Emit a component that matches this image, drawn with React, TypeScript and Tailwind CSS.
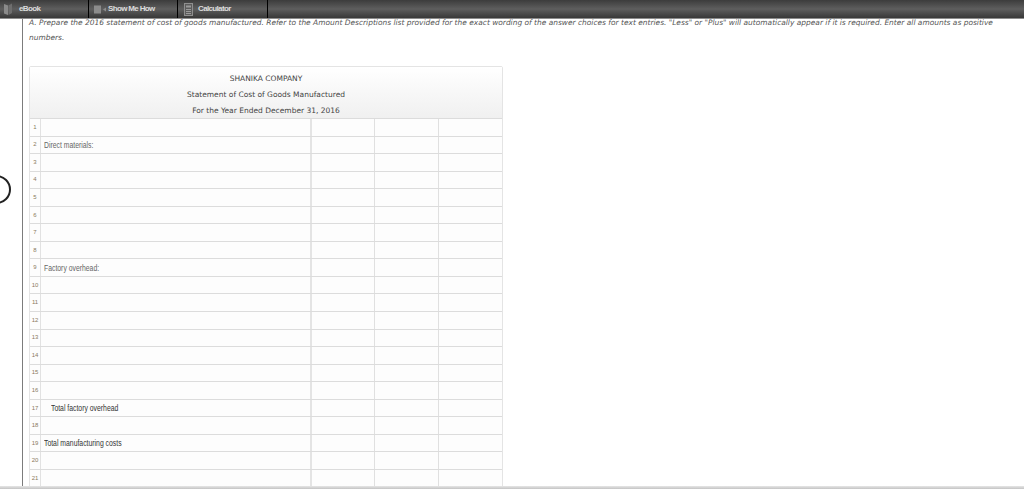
const labels: Record<number, { text: string; indent?: boolean; dark?: boolean }> = {
  2: { text: "Direct materials:" },
  9: { text: "Factory overhead:" },
  17: { text: "Total factory overhead", indent: true, dark: true },
  19: { text: "Total manufacturing costs", dark: true },
};

const rows = Array.from({ length: 21 }, (_, i) => i + 1);

function BookIcon() {
  return (
    <svg width="10" height="14" viewBox="0 0 10 14" className="mr-[6px]">
      <path d="M1 2 L5 3.5 V13 L1 11.5 Z" fill="#8a8a8a" />
      <path d="M5.5 3.5 L9 1.5 V11 L5.5 13 Z" fill="#6e6e6e" />
    </svg>
  );
}

function VideoIcon() {
  return (
    <svg width="13" height="9" viewBox="0 0 13 9" className="mr-[1px]">
      <rect x="0" y="0.5" width="7" height="8" fill="#8c8c8c" />
      <path d="M9 4.5 L12 2.5 V6.5 Z" fill="#8c8c8c" />
    </svg>
  );
}

function CalcIcon() {
  return (
    <svg width="9" height="13" viewBox="0 0 9 13" className="mr-[5px]">
      <rect x="0.5" y="0.5" width="8" height="12" fill="#5c5c5c" stroke="#8f8f8f" />
      <rect x="2" y="2.5" width="5" height="2" fill="#9a9a9a" />
      <path d="M2 6.5 H7 M2 8.5 H7 M2 10.5 H7" stroke="#9a9a9a" strokeWidth="1" />
    </svg>
  );
}

function ToolButton({ width, pad, icon, label }: { width: string; pad: string; icon: React.ReactNode; label: string }) {
  return (
    <div className={`flex h-full items-center border-r border-black ${width} ${pad}`}>
      {icon}
      <span className="font-['Liberation_Sans',sans-serif] text-[8px] font-bold tracking-[-0.65px] text-[#dcdcdc]">{label}</span>
    </div>
  );
}

export default function App() {
  return (
    <div className="relative flex h-[489px] w-[1024px] flex-col overflow-hidden bg-white">
      <div className="relative z-10 flex h-[19px] shrink-0 items-stretch border-b border-[#8c8c8c] bg-gradient-to-b from-[#3c3c3c] via-[#5e5e5e] to-[#383838]">
        <ToolButton width="w-[89px]" pad="pl-[3px]" icon={<BookIcon />} label="eBook" />
        <ToolButton width="w-[89px]" pad="pl-[5px]" icon={<VideoIcon />} label="Show Me How" />
        <ToolButton width="w-[90px]" pad="pl-[6px]" icon={<CalcIcon />} label="Calculator" />
      </div>

      <div className="absolute left-[-18px] top-[175px] h-[29px] w-[29px] rounded-full border-2 border-[#222] bg-white" />

      <div className="ml-[22px] flex min-h-0 flex-1 flex-col border-l-[1.5px] border-[#7c7c7c] pl-[6px]">
        <p className="-mt-[3px] h-[50px] w-[970px] font-['DejaVu_Sans',sans-serif] text-[7.46px] italic leading-[14.5px] text-[#555]">
          A. Prepare the 2016 statement of cost of goods manufactured. Refer to the Amount Descriptions list provided for the exact wording of the answer choices for text entries. "Less" or "Plus" will automatically appear if it is required. Enter all amounts as positive numbers.
        </p>

        <div className="w-[474px] rounded-t-[2px] border border-[#e4e4e4]">
          <div className="flex h-[51px] flex-col items-center justify-center bg-gradient-to-b from-white to-[#f0f0f0] pt-[4px] font-['DejaVu_Sans',sans-serif] text-[7.5px] leading-[16px] text-[#444]">
            <div>SHANIKA COMPANY</div>
            <div>Statement of Cost of Goods Manufactured</div>
            <div>For the Year Ended December 31, 2016</div>
          </div>
          {rows.map((n) => (
            <div key={n} className="grid h-[17.55px] grid-cols-[10px_270px_64px_64px_1fr] border-t border-[#dcdcdc] bg-[#fdfdfd]">
              <div className="flex items-center justify-center font-['Liberation_Sans',sans-serif] text-[6px] text-[#8a7a60]">{n}</div>
              <div className={`flex items-center border-l border-[#e2e2e2] font-['Liberation_Sans',sans-serif] text-[9.5px] ${labels[n]?.indent ? "pl-[10px]" : "pl-[3px]"} ${labels[n]?.dark ? "text-[#333]" : "text-[#666]"}`}>
                <span className="inline-block origin-left scale-x-[0.72] whitespace-nowrap">{labels[n]?.text}</span>
              </div>
              <div className="border-l-2 border-[#e4e4e4]" />
              <div className="border-l border-[#e0e0e0]" />
              <div className="border-l border-[#e0e0e0]" />
            </div>
          ))}
        </div>
      </div>

      <div className="absolute bottom-0 left-0 h-[3px] w-full bg-gradient-to-b from-[#e6e6e6] to-[#c4c4c4]" />
    </div>
  );
}
